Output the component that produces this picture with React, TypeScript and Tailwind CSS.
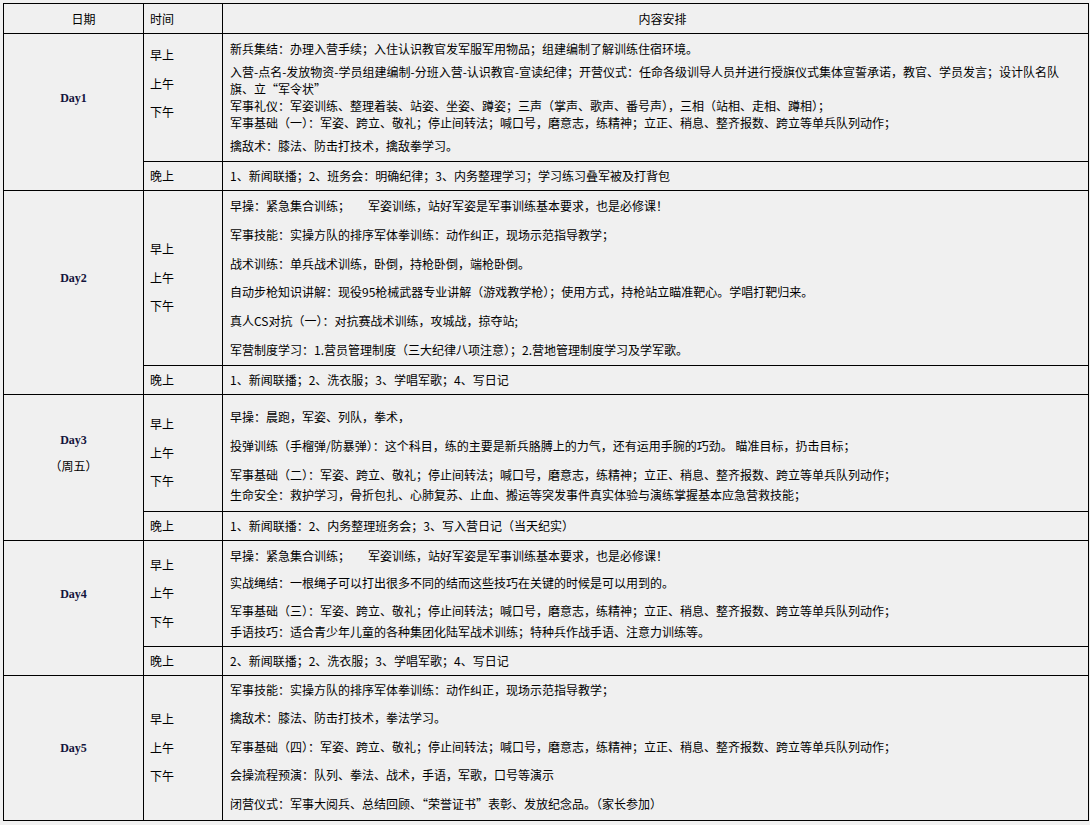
import React from "react"

type Line = { text: React.ReactNode; mt: string }

type Day = {
  label: string
  sub?: string
  timeClass: string
  contentClass: string
  lines: Line[]
  evening?: string
}

const days: Day[] = [
  {
    label: "Day1",
    timeClass: "pb-[27px]",
    contentClass: "pt-[6px] pb-[7px]",
    lines: [
      { text: "新兵集结：办理入营手续；入住认识教官发军服军用物品；组建编制了解训练住宿环境。", mt: "mt-0" },
      {
        text: (
          <>
            入营-点名-发放物资-学员组建编制-分班入营-认识教官-宣读纪律；开营仪式：任命各级训导人员并进行授旗仪式集体宣誓承诺，教官、学员发言；设计队名队
            <br />
            旗、立“军令状”
          </>
        ),
        mt: "mt-[6px]",
      },
      { text: "军事礼仪：军姿训练、整理着装、站姿、坐姿、蹲姿；三声（掌声、歌声、番号声），三相（站相、走相、蹲相）；", mt: "mt-0" },
      { text: "军事基础（一）：军姿、跨立、敬礼；停止间转法；喊口号，磨意志，练精神；立正、稍息、整齐报数、跨立等单兵队列动作；", mt: "mt-0" },
      { text: "擒敌术：膝法、防击打技术，擒敌拳学习。", mt: "mt-[6px]" },
    ],
    evening: "1、新闻联播；2、班务会：明确纪律；3、内务整理学习；学习练习叠军被及打背包",
  },
  {
    label: "Day2",
    timeClass: "",
    contentClass: "pt-[6px] pb-[7px]",
    lines: [
      { text: "早操：紧急集合训练；\u3000\u3000军姿训练，站好军姿是军事训练基本要求，也是必修课！", mt: "mt-0" },
      { text: "军事技能：实操方队的排序军体拳训练：动作纠正，现场示范指导教学；", mt: "mt-[11.75px]" },
      { text: "战术训练：单兵战术训练，卧倒，持枪卧倒，端枪卧倒。", mt: "mt-[11.75px]" },
      { text: "自动步枪知识讲解：现役95枪械武器专业讲解（游戏教学枪）；使用方式，持枪站立瞄准靶心。学唱打靶归来。", mt: "mt-[11.75px]" },
      { text: "真人CS对抗（一）：对抗赛战术训练，攻城战，掠夺站;", mt: "mt-[11.75px]" },
      { text: "军营制度学习：1.营员管理制度（三大纪律八项注意）；2.营地管理制度学习及学军歌。", mt: "mt-[11.75px]" },
    ],
    evening: "1、新闻联播；2、洗衣服；3、学唱军歌；4、写日记",
  },
  {
    label: "Day3",
    sub: "（周五）",
    timeClass: "",
    contentClass: "pt-[13.5px] pb-[8px]",
    lines: [
      { text: "早操：晨跑，军姿、列队，拳术，", mt: "mt-0" },
      { text: "投弹训练（手榴弹/防暴弹）：这个科目，练的主要是新兵胳膊上的力气，还有运用手腕的巧劲。 瞄准目标，扔击目标；", mt: "mt-[12px]" },
      { text: "军事基础（二）：军姿、跨立、敬礼；停止间转法；喊口号，磨意志，练精神；立正、稍息、整齐报数、跨立等单兵队列动作；", mt: "mt-[12px]" },
      { text: "生命安全：救护学习，骨折包扎、心肺复苏、止血、搬运等突发事件真实体验与演练掌握基本应急营救技能；", mt: "mt-[2.5px]" },
    ],
    evening: "1、新闻联播：2、内务整理班务会；3、写入营日记（当天纪实）",
  },
  {
    label: "Day4",
    timeClass: "",
    contentClass: "pt-[6px] pb-[5.5px]",
    lines: [
      { text: "早操：紧急集合训练；\u3000\u3000军姿训练，站好军姿是军事训练基本要求，也是必修课！", mt: "mt-0" },
      { text: "实战绳结：一根绳子可以打出很多不同的结而这些技巧在关键的时候是可以用到的。", mt: "mt-[10.5px]" },
      { text: "军事基础（三）：军姿、跨立、敬礼；停止间转法；喊口号，磨意志，练精神；立正、稍息、整齐报数、跨立等单兵队列动作；", mt: "mt-[11px]" },
      { text: "手语技巧：适合青少年儿童的各种集团化陆军战术训练；特种兵作战手语、注意力训练等。", mt: "mt-[4px]" },
    ],
    evening: "2、新闻联播；2、洗衣服；3、学唱军歌；4、写日记",
  },
  {
    label: "Day5",
    timeClass: "",
    contentClass: "pt-[5px] pb-[8px]",
    lines: [
      { text: "军事技能：实操方队的排序军体拳训练：动作纠正，现场示范指导教学；", mt: "mt-0" },
      { text: "擒敌术：膝法、防击打技术，拳法学习。", mt: "mt-[11.5px]" },
      { text: "军事基础（四）：军姿、跨立、敬礼；停止间转法；喊口号，磨意志，练精神；立正、稍息、整齐报数、跨立等单兵队列动作；", mt: "mt-[11.5px]" },
      { text: "会操流程预演：队列、拳法、战术，手语，军歌，口号等演示", mt: "mt-[11.5px]" },
      { text: "闭营仪式：军事大阅兵、总结回顾、“荣誉证书”表彰、发放纪念品。（家长参加）", mt: "mt-[11.5px]" },
    ],
  },
]

const cell = "border-r border-b border-black"

export default function App() {
  return (
    <div className="min-h-screen w-[1090px] bg-[#f0f0f0] pt-[3px] pl-[3px] font-['Noto_Sans_CJK_SC',sans-serif] text-[12px] text-black">
      <div className="grid w-[1086px] grid-cols-[140px_79px_866px] border-l border-t border-black">
        {/* Header */}
        <div className={`${cell} flex h-[30px] items-center justify-center pl-[20px]`}>日期</div>
        <div className={`${cell} flex h-[30px] items-center pl-[6px]`}>时间</div>
        <div className={`${cell} flex h-[30px] items-center justify-center pl-[14px]`}>内容安排</div>

        {days.map((day) => (
          <React.Fragment key={day.label}>
            <div
              className={`${day.evening ? "border-r border-black" : cell} flex flex-col items-center justify-center font-['Liberation_Serif',serif] font-bold text-[#14143c]`}
            >
              <div className="leading-[26px]">{day.label}</div>
              {day.sub && (
                <div className="font-['Noto_Sans_CJK_SC',sans-serif] font-normal leading-[26px] text-black">{day.sub}</div>
              )}
            </div>
            <div className={`${cell} flex flex-col justify-center pl-[6px] ${day.timeClass}`}>
              <div className="leading-[28.5px]">早上</div>
              <div className="leading-[28.5px]">上午</div>
              <div className="leading-[28.5px]">下午</div>
            </div>
            <div className={`${cell} pl-[7px] pr-[4px] ${day.contentClass}`}>
              {day.lines.map((line, i) => (
                <div key={i} className={`whitespace-nowrap leading-[17px] ${line.mt}`}>
                  {line.text}
                </div>
              ))}
            </div>

            {day.evening && (
              <>
                <div className={`${cell}`} />
                <div className={`${cell} flex h-[29px] items-center pl-[6px]`}>晚上</div>
                <div className={`${cell} flex h-[29px] items-center pl-[7px]`}>{day.evening}</div>
              </>
            )}
          </React.Fragment>
        ))}
      </div>
    </div>
  )
}
